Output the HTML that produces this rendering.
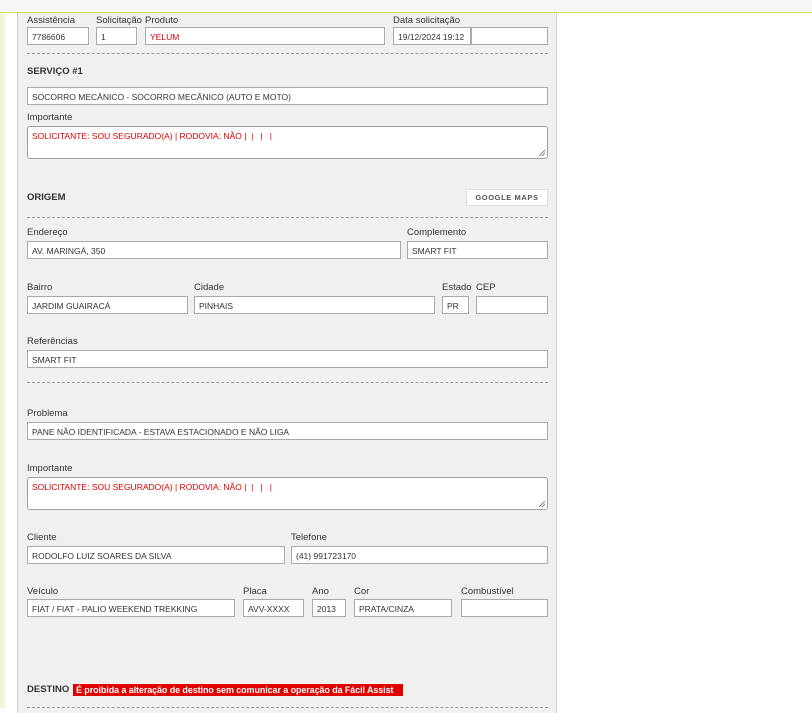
<!DOCTYPE html>
<html><head><meta charset="utf-8"><style>
*{margin:0;padding:0;box-sizing:border-box}
body{width:812px;height:708px;overflow:hidden;background:#fff;font-family:"Liberation Sans",Arial,sans-serif;position:relative}
.top{position:absolute;left:0;top:0;width:812px;height:13px;background:#f6f6f6;border-bottom:1px solid #cfdc5c}
.strip{position:absolute;left:0;top:13px;width:5px;height:695px;background:#f1f6d8}
.panel{position:absolute;left:17px;top:13px;width:540px;height:700px;background:#f0f0f0;border-left:1px solid #d0d0d0;border-right:1px solid #d0d0d0}
.l{position:absolute;font-size:9.5px;color:#333;white-space:nowrap}
.i{position:absolute;height:18px;background:#fff;border:1px solid #a9a9a9;font-size:8.5px;color:#333;padding:4px 0 0 4px;white-space:nowrap;overflow:hidden}
.ta{position:absolute;height:33px;background:#fff;border:1px solid #a0a0a0;border-radius:3px;font-size:8.5px;color:#d00;padding:4px 0 0 4px}
.ta:after{content:"";position:absolute;right:2px;bottom:2px;width:6px;height:6px;background:linear-gradient(135deg,transparent 45%,#888 45%,#888 55%,transparent 55%,transparent 70%,#888 70%,#888 80%,transparent 80%)}
.red{color:#d00}
.h{position:absolute;font-size:9.5px;font-weight:bold;color:#333}
.d{position:absolute;left:27px;width:521px;border-top:1px dashed #999}
</style></head><body>
<div class="top"></div><div class="strip"></div><div class="panel"></div>

<div class="l" style="left:27px;top:15px">Assistência</div>
<div class="l" style="left:96px;top:15px">Solicitação</div>
<div class="l" style="left:145px;top:15px">Produto</div>
<div class="l" style="left:393px;top:15px">Data solicitação</div>
<div class="i" style="left:27px;top:27px;width:62px">7786606</div>
<div class="i" style="left:96px;top:27px;width:41px">1</div>
<div class="i red" style="left:145px;top:27px;width:240px">YELUM</div>
<div class="i" style="left:393px;top:27px;width:78px">19/12/2024 19:12</div>
<div class="i" style="left:471px;top:27px;width:77px"></div>
<div class="d" style="top:53px"></div>

<div class="h" style="left:27px;top:66px">SERVIÇO #1</div>
<div class="i" style="left:27px;top:87px;width:521px">SOCORRO MECÂNICO - SOCORRO MECÂNICO (AUTO E MOTO)</div>
<div class="l" style="left:27px;top:112px">Importante</div>
<div class="ta" style="left:27px;top:126px;width:521px">SOLICITANTE: SOU SEGURADO(A) | RODOVIA: NÃO |&nbsp; |&nbsp;&nbsp; |&nbsp;&nbsp; |</div>

<div class="h" style="left:27px;top:192px">ORIGEM</div>
<div style="position:absolute;left:466px;top:189px;width:82px;height:17px;background:#fff;border:1px solid #ddd;font-size:7.5px;font-weight:bold;color:#555;text-align:center;line-height:15px;letter-spacing:0.6px">GOOGLE MAPS</div>
<div class="d" style="top:217px"></div>

<div class="l" style="left:27px;top:227px">Endereço</div>
<div class="l" style="left:407px;top:227px">Complemento</div>
<div class="i" style="left:27px;top:241px;width:374px">AV. MARINGÁ, 350</div>
<div class="i" style="left:407px;top:241px;width:141px">SMART FIT</div>

<div class="l" style="left:27px;top:282px">Bairro</div>
<div class="l" style="left:194px;top:282px">Cidade</div>
<div class="l" style="left:442px;top:282px">Estado</div>
<div class="l" style="left:476px;top:282px">CEP</div>
<div class="i" style="left:27px;top:296px;width:161px">JARDIM GUAIRACÁ</div>
<div class="i" style="left:194px;top:296px;width:241px">PINHAIS</div>
<div class="i" style="left:442px;top:296px;width:27px">PR</div>
<div class="i" style="left:476px;top:296px;width:72px"></div>

<div class="l" style="left:27px;top:336px">Referências</div>
<div class="i" style="left:27px;top:350px;width:521px">SMART FIT</div>
<div class="d" style="top:382px"></div>

<div class="l" style="left:27px;top:408px">Problema</div>
<div class="i" style="left:27px;top:422px;width:521px">PANE NÃO IDENTIFICADA - ESTAVA ESTACIONADO E NÃO LIGA</div>
<div class="l" style="left:27px;top:463px">Importante</div>
<div class="ta" style="left:27px;top:477px;width:521px">SOLICITANTE: SOU SEGURADO(A) | RODOVIA: NÃO |&nbsp; |&nbsp;&nbsp; |&nbsp;&nbsp; |</div>

<div class="l" style="left:27px;top:532px">Cliente</div>
<div class="l" style="left:291px;top:532px">Telefone</div>
<div class="i" style="left:27px;top:546px;width:258px">RODOLFO LUIZ SOARES DA SILVA</div>
<div class="i" style="left:291px;top:546px;width:257px">(41) 991723170</div>

<div class="l" style="left:27px;top:586px">Veículo</div>
<div class="l" style="left:243px;top:586px">Placa</div>
<div class="l" style="left:312px;top:586px">Ano</div>
<div class="l" style="left:354px;top:586px">Cor</div>
<div class="l" style="left:461px;top:586px">Combustível</div>
<div class="i" style="left:27px;top:599px;width:208px">FIAT / FIAT - PALIO WEEKEND TREKKING</div>
<div class="i" style="left:243px;top:599px;width:61px">AVV-XXXX</div>
<div class="i" style="left:312px;top:599px;width:34px">2013</div>
<div class="i" style="left:354px;top:599px;width:98px">PRATA/CINZA</div>
<div class="i" style="left:461px;top:599px;width:87px"></div>

<div class="h" style="left:27px;top:684px">DESTINO</div>
<div style="position:absolute;left:73px;top:684px;width:330px;height:12px;background:#e00000;color:#fff;font-size:9px;font-weight:bold;line-height:12px;padding-left:3px;white-space:nowrap;overflow:hidden;letter-spacing:-0.1px">É proibida a alteração de destino sem comunicar a operação da Fácil Assist</div>
<div class="d" style="top:707px"></div>
</body></html>
